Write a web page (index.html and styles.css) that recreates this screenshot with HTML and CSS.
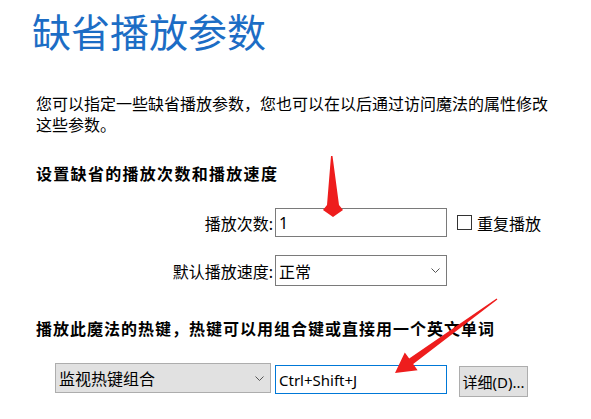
FILE: index.html
```html
<!DOCTYPE html>
<html lang="zh-CN">
<head>
    <meta charset="UTF-8">
    <title>缺省播放参数</title>
    <link rel="stylesheet" href="styles.css">
</head>
<body>
    <div class="page">
        <h1 class="title">缺省播放参数</h1>
        <p class="intro">您可以指定一些缺省播放参数，您也可以在以后通过访问魔法的属性修改这些参数。</p>

        <h2 class="section">设置缺省的播放次数和播放速度</h2>
        <div class="form-row row-count">
            <span class="label">播放次数:</span>
            <div class="field">1</div>
            <span class="check"><span class="check-box"></span>重复播放</span>
        </div>
        <div class="form-row row-speed">
            <span class="label">默认播放速度:</span>
            <div class="field dropdown">
                <span>正常</span>
                <svg class="chevron" width="9" height="5" viewBox="0 0 9 5"><path d="M0.5 0.5 L4.5 4.5 L8.5 0.5" fill="none" stroke="#555" stroke-width="1"/></svg>
            </div>
        </div>

        <h2 class="section section-hotkey">播放此魔法的热键，热键可以用组合键或直接用一个英文单词</h2>
        <div class="hotkey-row">
            <div class="dropdown grey-select">
                <span>监视热键组合</span>
                <svg class="chevron" width="9" height="5" viewBox="0 0 9 5"><path d="M0.5 0.5 L4.5 4.5 L8.5 0.5" fill="none" stroke="#555" stroke-width="1"/></svg>
            </div>
            <div class="field hotkey-field">Ctrl+Shift+J</div>
            <button class="btn">详细(D)...</button>
        </div>

        <!-- red marker arrows drawn over the dialog -->
        <svg class="marks" width="591" height="419" viewBox="0 0 591 419">
            <polygon fill="#ee1d1d" points="331,156 332.5,156 339,205 343,210 333,217 323,210 327,205"/>
            <polygon fill="#ee1d1d" points="497.4,299.6 413.2,364.1 417.6,370.2 395,373 404.8,352.4 409.2,358.5 496.6,298.4"/>
        </svg>
    </div>
</body>
</html>
```

FILE: styles.css
```css
body {
    margin: 0;
    font-family: "Noto Sans", "Noto Sans CJK SC", sans-serif;
    color: #000;
    background: #fff;
}
.page {
    position: relative;
    height: 419px;
    box-sizing: border-box;
    padding: 8px 0 0 36px;
    overflow: hidden;
}
.title {
    margin: 0 0 0 -4px;
    font-size: 39px;
    line-height: 48px;
    font-weight: 400;
    color: #1c6dc5;
}
.intro {
    margin: 38px 0 0;
    width: 520px;
    font-size: 16px;
    line-height: 21px;
}
.section {
    margin: 28px 0 0;
    font-size: 16px;
    line-height: 21px;
    font-weight: 700;
    letter-spacing: 1.3px;
}
.section-hotkey {
    margin-top: 33px;
    letter-spacing: 1px;
}
.form-row {
    display: flex;
    align-items: center;
    font-size: 16px;
}
.row-count {
    margin-top: 23px;
}
.row-speed {
    margin-top: 18px;
}
.label {
    width: 237px;
    margin-right: 2px;
    text-align: right;
}
.field {
    box-sizing: border-box;
    width: 172px;
    height: 29px;
    padding: 0 3px;
    border: 1px solid #7a7a7a;
    background: #fff;
    display: flex;
    align-items: center;
    font-size: 16px;
}
.dropdown {
    display: flex;
    align-items: center;
    justify-content: space-between;
    box-sizing: border-box;
    padding: 0 6px 0 3px;
}
.row-speed .dropdown {
    height: 31px;
}
.chevron {
    display: block;
}
.check {
    display: flex;
    align-items: center;
    margin-left: 10px;
}
.check-box {
    box-sizing: border-box;
    width: 15px;
    height: 15px;
    margin-right: 5px;
    border: 1px solid #333;
    background: #fff;
}
.hotkey-row {
    display: flex;
    align-items: flex-start;
    margin-top: 23px;
    font-size: 16px;
}
.grey-select {
    width: 216px;
    height: 30px;
    margin-left: 19px;
    border: 1px solid #adadad;
    background: #e1e1e1;
}
.hotkey-field {
    margin: 2px 0 0 4px;
    border-color: #0078d7;
    font-size: 15px;
}
.btn {
    box-sizing: border-box;
    width: 69px;
    height: 31px;
    margin: 3px 0 0 12px;
    padding: 0 2px;
    border: 1px solid #adadad;
    background: #e1e1e1;
    font-family: inherit;
    font-size: 15px;
    color: #000;
}
.marks {
    position: absolute;
    left: 0;
    top: 0;
}
```
